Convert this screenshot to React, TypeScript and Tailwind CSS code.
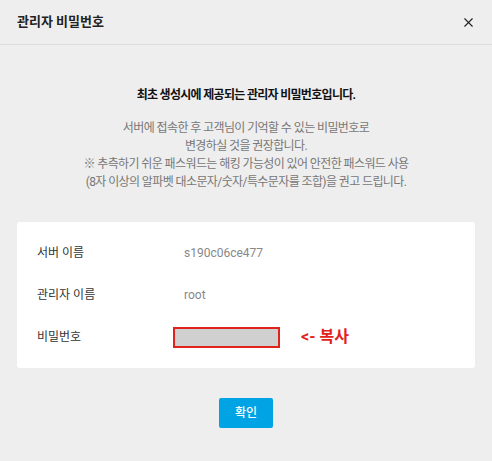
import { X } from 'lucide-react';

const rows = [
  { label: '서버 이름', value: 's190c06ce477' },
  { label: '관리자 이름', value: 'root' },
];

export default function App() {
  return (
    <div
      className="w-[492px] h-[461px] bg-[#eeeeee] flex flex-col text-[#222]"
      style={{ fontFamily: 'Roboto, "Noto Sans CJK KR", sans-serif' }}
    >
      {/* Header */}
      <div className="h-[45px] shrink-0 flex items-center justify-between pl-[17px] pr-[16px] border-b border-[#dcdcdc]">
        <h2 className="text-[13px] font-bold text-[#222]">관리자 비밀번호</h2>
        <button className="text-[#222]" aria-label="닫기">
          <X size={15} strokeWidth={1.8} />
        </button>
      </div>

      {/* Body */}
      <div className="flex flex-col items-center px-[17px] pt-[41px]">
        <p className="text-[12px] font-bold leading-[18px] tracking-[-0.7px] text-[#111]">
          최초 생성시에 제공되는 관리자 비밀번호입니다.
        </p>
        <p className="mt-[15px] text-[12px] leading-[18px] tracking-[-0.6px] text-[#777] text-center">
          서버에 접속한 후 고객님이 기억할 수 있는 비밀번호로
          <br />
          변경하실 것을 권장합니다.
          <br />※ 추측하기 쉬운 패스워드는 해킹 가능성이 있어 안전한 패스워드 사용
          <br />
          (8자 이상의 알파벳 대소문자/숫자/특수문자를 조합)을 권고 드립니다.
        </p>

        <div className="mt-[31px] w-full bg-white rounded-[3px] px-[20px] py-[10px] flex flex-col">
          {rows.map((row) => (
            <div key={row.label} className="h-[42px] flex items-center text-[12px]">
              <span className="w-[147px] text-[#333]">{row.label}</span>
              <span className="text-[#888]">{row.value}</span>
            </div>
          ))}
          <div className="h-[42px] flex items-center text-[12px]">
            <span className="w-[136px] text-[#333]">비밀번호</span>
            <span className="w-[107px] h-[21px] bg-[#d0d0d0] border-[2px] border-[#e0231b]" />
            <span className="ml-[21px] text-[16px] font-bold text-[#e0231b]">&lt;- 복사</span>
          </div>
        </div>

        <button className="mt-[30px] w-[54px] h-[30px] rounded-[2px] bg-[#00a3e4] text-white text-[12px] font-medium">
          확인
        </button>
      </div>
    </div>
  );
}
